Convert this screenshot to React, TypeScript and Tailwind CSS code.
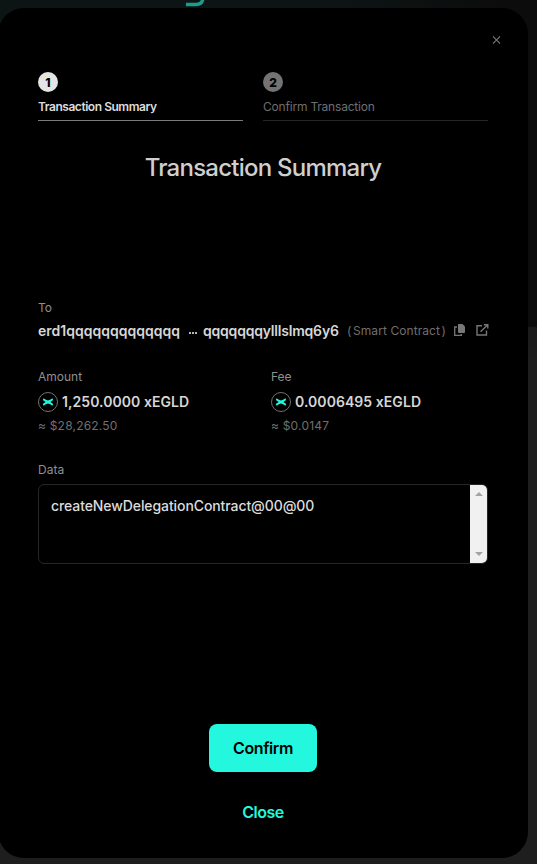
import type { ReactNode } from 'react';

function TokenIcon() {
  return (
    <svg className="h-5 w-5 shrink-0" viewBox="0 0 20 20" fill="none">
      <circle cx="10" cy="10" r="9.5" fill="#000" stroke="#7d7d7d" strokeWidth="0.9" />
      <path
        d="M5.6 6.3 Q8 8.1 10 8.4 Q12 8.1 14.4 6.3 L15.2 8 L12.4 10 L15.2 12 L14.4 13.7 Q12 11.9 10 11.6 Q8 11.9 5.6 13.7 L4.8 12 L7.6 10 L4.8 8 Z"
        fill="#23f7dd"
      />
    </svg>
  );
}

function Step({ n, label, active }: { n: number; label: string; active?: boolean }) {
  return (
    <div
      className={`flex h-[49px] flex-col border-b ${
        active ? 'w-[205px] border-[#7b7b7b] text-[#dcdcdc]' : 'w-[225px] border-[#262626] text-[#6f6f6f]'
      }`}
    >
      <span
        className={`flex h-5 w-5 items-center justify-center rounded-full pt-px text-[12px] leading-none font-extrabold text-black ${
          active ? 'bg-[#e5e5e5]' : 'bg-[#737373]'
        }`}
      >
        {n}
      </span>
      <span
        className={`mt-[7px] text-[12px] leading-4 whitespace-nowrap ${
          active ? 'font-semibold tracking-[-0.46px]' : 'tracking-[-0.2px]'
        }`}
      >
        {label}
      </span>
    </div>
  );
}

function Amount({ label, value, fiat }: { label: string; value: ReactNode; fiat: string }) {
  return (
    <div className="flex w-[233px] shrink-0 flex-col">
      <span className="text-[12px] leading-4 text-[#8f8f8f]">{label}</span>
      <div className="mt-[7px] flex h-5 items-center gap-1">
        <TokenIcon />
        <span className="text-[14px] leading-5 font-semibold tracking-[0.06px] whitespace-nowrap text-[#d6d6d6]">
          {value}
        </span>
      </div>
      <span className="mt-[6px] text-[12px] leading-4 tracking-[0.2px] text-[#6f6f6f]">≈ {fiat}</span>
    </div>
  );
}

export default function App() {
  return (
    <div className="relative h-[864px] w-[537px] overflow-hidden bg-[linear-gradient(to_bottom,#0c0c0c_327px,#1a1a1a_327px,#1e1e1e_360px)] font-['Inter',sans-serif]">
      <div className="absolute top-0 left-0 h-10 w-[537px] bg-[linear-gradient(to_right,#0d1514,#0d1514_60%,#0c0c0c_95%)]" />
      <svg className="absolute top-0 left-[184px]" width="24" height="8" viewBox="0 0 24 8" fill="none">
        <path d="M2 4.5 H12 C16 4.5 18.3 2.5 18.8 -1" stroke="#1c9c8d" strokeWidth="3.4" />
      </svg>

      <div className="relative mt-2 -ml-[2px] flex h-[850px] w-[530px] flex-col rounded-[26px] bg-black px-10">
        <div className="-mr-[13px] flex h-16 justify-end pt-[27px]">
          <svg width="9" height="10" viewBox="0 0 9 10" stroke="#757575" strokeWidth="1.2">
            <path d="M1 1.4 L8 8.6 M8 1.4 L1 8.6" />
          </svg>
        </div>

        <div className="flex gap-5">
          <Step n={1} label="Transaction Summary" active />
          <Step n={2} label="Confirm Transaction" />
        </div>

        <h1 className="mt-[31px] text-center text-[24px] leading-8 font-medium tracking-[-0.76px] whitespace-nowrap text-[#cfcfcf]">
          Transaction Summary
        </h1>

        <div className="mt-[116px] flex flex-col">
          <span className="text-[12px] leading-4 text-[#8f8f8f]">To</span>
          <div className="mt-[5px] flex h-5 items-center whitespace-nowrap">
            <span className="w-[143px] shrink-0 text-[14px] leading-5 font-semibold tracking-[0.02px] text-[#d6d6d6]">
              erd1qqqqqqqqqqqqq
            </span>
            <span className="mt-[3px] ml-[8px] flex w-[14px] shrink-0 gap-[1px]">
              <i className="h-[2px] w-[2px] bg-[#b8b8b8]" />
              <i className="h-[2px] w-[2px] bg-[#b8b8b8]" />
              <i className="h-[2px] w-[2px] bg-[#b8b8b8]" />
            </span>
            <span className="w-[136px] shrink-0 text-[14px] leading-5 font-semibold tracking-[-0.2px] text-[#d6d6d6]">
              qqqqqqqylllslmq6y6
            </span>
            <span className="ml-[8px] flex w-[99px] shrink-0 justify-between text-[12px] text-[#6f6f6f]">
              <span>(</span>
              <span className="tracking-[0.08px]">Smart Contract</span>
              <span>)</span>
            </span>
            <svg className="-mt-[2px] ml-[8px] shrink-0" width="12" height="12" viewBox="0 0 12 12" fill="none">
              <path d="M4 0 H8.5 L11 2.5 V8 Q11 9 10 9 H5 Q4 9 4 8 Z" fill="#777" />
              <path d="M3 3 H0.7 V11.3 H7.3 V10" stroke="#777" strokeWidth="1.3" />
            </svg>
            <svg
              className="-mt-[2px] ml-[10px] shrink-0"
              width="13"
              height="12"
              viewBox="0 0 13 12"
              fill="none"
              stroke="#777"
              strokeWidth="1.4"
            >
              <path d="M6 1.7 H1 V11 H10.5 V6.5 M4.5 7.7 L11.5 1 M7.8 0.8 H11.8 V4.5" />
            </svg>
          </div>
        </div>

        <div className="mt-[28px] flex">
          <Amount label="Amount" value="1,250.0000 xEGLD" fiat="$28,262.50" />
          <Amount label="Fee" value="0.0006495 xEGLD" fiat="$0.0147" />
        </div>

        <div className="mt-[28px] flex flex-col">
          <span className="text-[12px] leading-4 text-[#8f8f8f]">Data</span>
          <div className="mt-[6px] flex h-20 justify-between overflow-hidden rounded-md border border-[#262626]">
            <span className="pt-[11px] pl-3 text-[14px] leading-5 font-medium tracking-[-0.09px] text-[#dcdcdc]">
              createNewDelegationContract@00@00
            </span>
            <div className="flex w-[17px] flex-col items-center justify-between bg-[#f1f1f1] pt-[7px] pb-[7px]">
              <i className="border-x-[4px] border-b-[4px] border-x-transparent border-b-[#a3a3a3]" />
              <i className="border-x-[4px] border-t-[4px] border-x-transparent border-t-[#a3a3a3]" />
            </div>
          </div>
        </div>

        <div className="mt-[160px] flex flex-col items-center">
          <button className="h-12 w-[108px] rounded-lg bg-[#23f7dd] text-[16px] font-semibold tracking-[-0.4px] text-black">
            Confirm
          </button>
          <button className="mt-7 h-6 text-[16px] leading-6 font-semibold tracking-[-0.5px] text-[#23f7dd]">
            Close
          </button>
        </div>
      </div>
    </div>
  );
}
